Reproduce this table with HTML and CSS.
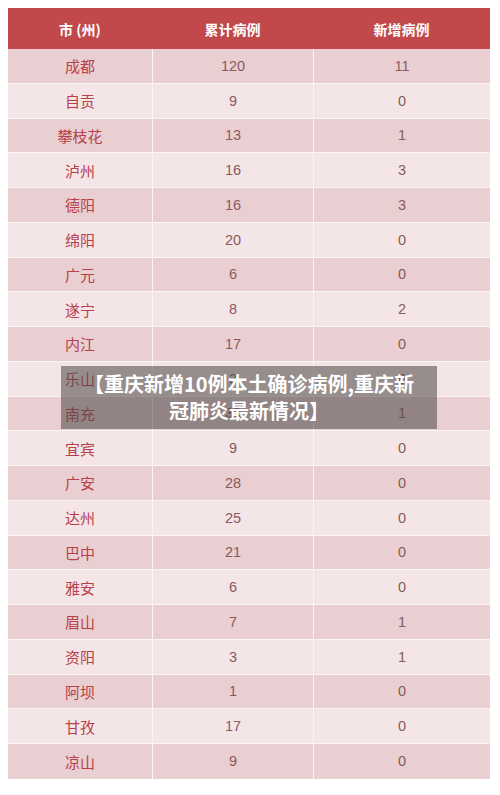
FILE: index.html
```html
<!DOCTYPE html>
<html lang="zh-CN">
<head>
<meta charset="utf-8">
<title>四川各市州病例</title>
<link rel="stylesheet" href="styles.css">
</head>
<body>
<div class="page">
  <div class="table">
    <div class="row head"><div class="cell">市 (州)</div><div class="cell">累计病例</div><div class="cell">新增病例</div></div>
    <div class="row odd"><div class="cell city">成都</div><div class="cell num">120</div><div class="cell num">11</div></div>
    <div class="row even"><div class="cell city">自贡</div><div class="cell num">9</div><div class="cell num">0</div></div>
    <div class="row odd"><div class="cell city">攀枝花</div><div class="cell num">13</div><div class="cell num">1</div></div>
    <div class="row even"><div class="cell city">泸州</div><div class="cell num">16</div><div class="cell num">3</div></div>
    <div class="row odd"><div class="cell city">德阳</div><div class="cell num">16</div><div class="cell num">3</div></div>
    <div class="row even"><div class="cell city">绵阳</div><div class="cell num">20</div><div class="cell num">0</div></div>
    <div class="row odd"><div class="cell city">广元</div><div class="cell num">6</div><div class="cell num">0</div></div>
    <div class="row even"><div class="cell city">遂宁</div><div class="cell num">8</div><div class="cell num">2</div></div>
    <div class="row odd"><div class="cell city">内江</div><div class="cell num">17</div><div class="cell num">0</div></div>
    <div class="row even"><div class="cell city">乐山</div><div class="cell num">3</div><div class="cell num">0</div></div>
    <div class="row odd"><div class="cell city">南充</div><div class="cell num">39</div><div class="cell num">1</div></div>
    <div class="row even"><div class="cell city">宜宾</div><div class="cell num">9</div><div class="cell num">0</div></div>
    <div class="row odd"><div class="cell city">广安</div><div class="cell num">28</div><div class="cell num">0</div></div>
    <div class="row even"><div class="cell city">达州</div><div class="cell num">25</div><div class="cell num">0</div></div>
    <div class="row odd"><div class="cell city">巴中</div><div class="cell num">21</div><div class="cell num">0</div></div>
    <div class="row even"><div class="cell city">雅安</div><div class="cell num">6</div><div class="cell num">0</div></div>
    <div class="row odd"><div class="cell city">眉山</div><div class="cell num">7</div><div class="cell num">1</div></div>
    <div class="row even"><div class="cell city">资阳</div><div class="cell num">3</div><div class="cell num">1</div></div>
    <div class="row odd"><div class="cell city">阿坝</div><div class="cell num">1</div><div class="cell num">0</div></div>
    <div class="row even"><div class="cell city">甘孜</div><div class="cell num">17</div><div class="cell num">0</div></div>
    <div class="row odd last"><div class="cell city">凉山</div><div class="cell num">9</div><div class="cell num">0</div></div>
  </div>
  <div class="caption">【重庆新增10例本土确诊病例,重庆新<br>冠肺炎最新情况】</div>
</div>
</body>
</html>
```

FILE: styles.css
```css
html, body {
  margin: 0;
  padding: 0;
  background: #ffffff;
}
body {
  font-family: "Noto Sans CJK SC", "Noto Sans", sans-serif;
}
.page {
  position: relative;
  width: 500px;
  height: 795px;
  padding: 8px 0 0 8px;
  box-sizing: border-box;
}
.table {
  width: 482px;
  display: flex;
  flex-direction: column;
}
.row {
  display: grid;
  grid-template-columns: 144px 161px 177px;
  height: 34.76px;
  box-sizing: border-box;
  border-bottom: 1px solid #fbf5f5;
}
.row.last {
  border-bottom: none;
}
.row.head {
  height: 41px;
  background: #c1494b;
  border-bottom: none;
}
.cell {
  display: flex;
  align-items: center;
  justify-content: center;
  font-size: 15px;
}
.cell + .cell {
  border-left: 1px solid #fbf5f5;
}
.head .cell {
  color: #ffffff;
  font-weight: 700;
  font-size: 14px;
  border-left: none;
}
.odd {
  background: #e9cfd1;
}
.even {
  background: #f4e6e7;
}
.city {
  color: #b8404a;
}
.num {
  color: #8a5a5c;
  font-family: "Liberation Sans", "Noto Sans", sans-serif;
  font-size: 14.5px;
}
.caption {
  position: absolute;
  left: 61px;
  top: 366px;
  width: 376px;
  height: 63px;
  box-sizing: border-box;
  background: rgba(78, 72, 72, 0.56);
  color: #ffffff;
  font-weight: 700;
  font-size: 20px;
  line-height: 27px;
  text-align: center;
  padding-top: 4px;
}
```
